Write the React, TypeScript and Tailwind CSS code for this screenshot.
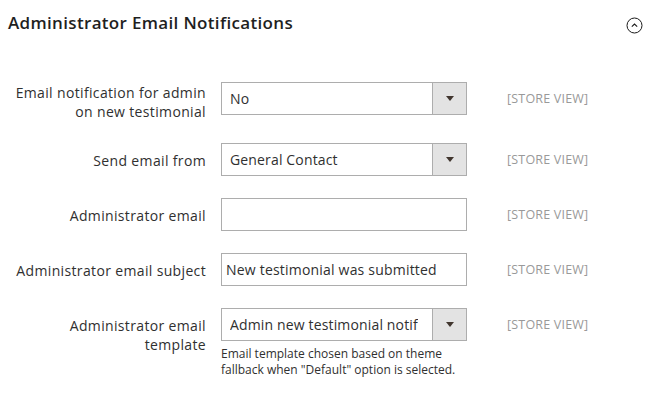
import type { ReactNode } from 'react';

const FONT = { fontFamily: '"Open Sans", "Noto Sans", Arial, sans-serif' };

function SelectBox({ value }: { value: string }) {
  return (
    <div className="flex h-[33px] w-[246px] border border-[#adadad] bg-white">
      <div className="min-w-0 flex-1 pl-[8px] pr-[14px]">
        <div className="overflow-hidden whitespace-nowrap text-[14px] leading-[31px] tracking-[0.15px] text-[#303030]">
          {value}
        </div>
      </div>
      <div className="flex w-[34px] items-center justify-center border-l border-[#adadad] bg-[#e3e3e3]">
        <span className="h-0 w-0 border-l-[4px] border-r-[4px] border-t-[5px] border-l-transparent border-r-transparent border-t-[#41362f]" />
      </div>
    </div>
  );
}

function TextBox({ value = '' }: { value?: string }) {
  return (
    <div className="h-[33px] w-[246px] overflow-hidden whitespace-nowrap border border-[#adadad] bg-white pl-[4px] text-[14px] leading-[31px] tracking-[0.2px] text-[#303030]">
      {value}
    </div>
  );
}

function Row({
  label,
  labelPad = 'pt-[8px]',
  children,
  hint,
}: {
  label: ReactNode;
  labelPad?: string;
  children: ReactNode;
  hint?: ReactNode;
}) {
  return (
    <div className="flex items-start">
      <div className={`w-[206px] shrink-0 text-right text-[14px] leading-[19px] tracking-[0.35px] text-[#303030] ${labelPad}`}>
        {label}
      </div>
      <div className="ml-[15px] w-[246px] shrink-0">
        {children}
        {hint && (
          <div className="mt-[5px] text-[12px] leading-[16px] text-[#303030]">{hint}</div>
        )}
      </div>
      <div className="ml-[40px] pt-[8px] text-[12.5px] leading-[18px] tracking-[0.2px] text-[#999999]">
        [STORE VIEW]
      </div>
    </div>
  );
}

export default function App() {
  return (
    <div className="h-[420px] w-[670px] overflow-hidden bg-white" style={FONT}>
      {/* Section header */}
      <div className="flex items-start justify-between pl-[8px] pr-[27px] pt-[12px]">
        <h2 className="text-[17px] font-semibold leading-[22px] tracking-[0.33px] text-[#1f1f1f]">
          Administrator Email Notifications
        </h2>
        <svg width="17" height="17" viewBox="0 0 17 17" className="mt-[5px]">
          <circle cx="8.5" cy="8.5" r="7.5" fill="none" stroke="#1a1a1a" strokeWidth="1" />
          <path d="M5.8 9.6 L8.5 7 L11.2 9.6" fill="none" stroke="#1a1a1a" strokeWidth="1.1" />
        </svg>
      </div>

      {/* Fields */}
      <div className="mt-[48px] flex flex-col gap-[22px]">
        <Row
          labelPad="pt-[1px]"
          label={
            <>
              Email notification for admin
              <br />
              on new testimonial
            </>
          }
        >
          <SelectBox value="No" />
        </Row>
        <Row label="Send email from">
          <SelectBox value="General Contact" />
        </Row>
        <Row label="Administrator email">
          <TextBox />
        </Row>
        <Row label="Administrator email subject">
          <TextBox value="New testimonial was submitted" />
        </Row>
        <Row
          label={
            <>
              Administrator email
              <br />
              template
            </>
          }
          hint={
            <>
              Email template chosen based on theme
              <br />
              fallback when "Default" option is selected.
            </>
          }
        >
          <SelectBox value="Admin new testimonial notification (Default)" />
        </Row>
      </div>
    </div>
  );
}
